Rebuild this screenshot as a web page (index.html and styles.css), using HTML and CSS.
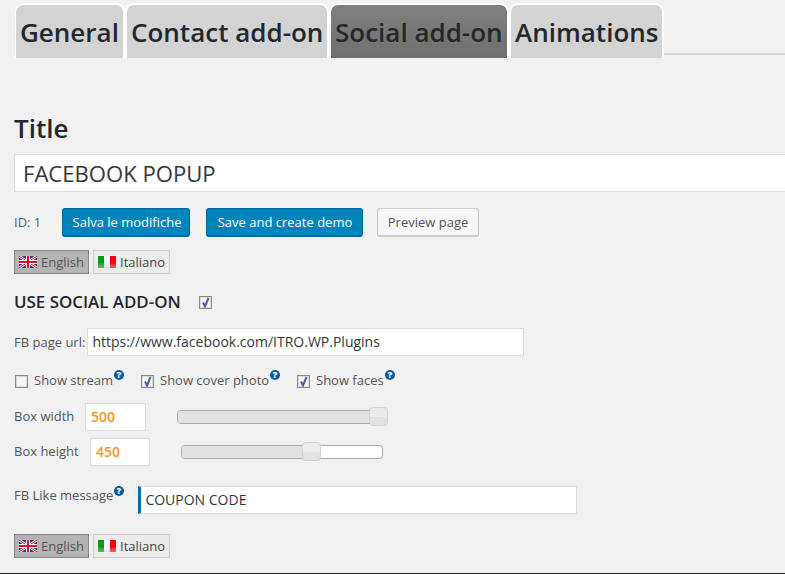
FILE: index.html
```html
<!DOCTYPE html>
<html lang="en">
<head>
<meta charset="utf-8">
<title>Social add-on</title>
<link rel="stylesheet" href="styles.css">
</head>
<body>
<svg class="defs" width="0" height="0" aria-hidden="true">
  <defs>
    <linearGradient id="fade" x1="0" y1="0" x2="0" y2="1">
      <stop offset="0.55" stop-color="#fff" stop-opacity="0"/>
      <stop offset="1" stop-color="#bbb" stop-opacity="0.55"/>
    </linearGradient>
    <symbol id="uk" viewBox="0 0 18 12">
      <rect width="18" height="12" fill="#2a3a8c"/>
      <path d="M0 0L18 12M18 0L0 12" stroke="#fff" stroke-width="2.6"/>
      <path d="M0 0L18 12M18 0L0 12" stroke="#d8102c" stroke-width="1"/>
      <path d="M9 0V12M0 6H18" stroke="#fff" stroke-width="4"/>
      <path d="M9 0V12M0 6H18" stroke="#d8102c" stroke-width="2.2"/>
    </symbol>
    <symbol id="it" viewBox="0 0 18 12">
      <rect width="6" height="12" fill="#0a9a10"/>
      <rect x="6" width="6" height="12" fill="#f8f8f8"/>
      <rect x="12" width="6" height="12" fill="#f00010"/>
      <rect width="18" height="12" fill="url(#fade)"/>
    </symbol>
    <symbol id="chk" viewBox="0 0 11 11">
      <path d="M3 5.5L5 9.5L8.5 1" fill="none" stroke="#4a5fa8" stroke-width="2"/>
    </symbol>
    <symbol id="help" viewBox="0 0 10 10">
      <circle cx="5" cy="5" r="5" fill="#0a5a9c"/>
      <text x="5" y="8.4" text-anchor="middle" font-family="Open Sans" font-weight="800" font-size="9.5" fill="#fff">?</text>
    </symbol>
  </defs>
</svg>

<nav class="tabs">
  <a class="tab tab-general">General</a>
  <a class="tab tab-contact">Contact add-on</a>
  <a class="tab tab-social tab-active">Social add-on</a>
  <a class="tab tab-anim">Animations</a>
  <span class="tabs-line"></span>
</nav>

<main class="content">
  <h1 class="title-label">Title</h1>
  <div class="title-field">FACEBOOK POPUP</div>

  <div class="actions">
    <span class="post-id">ID: 1</span>
    <button class="btn btn-primary btn-save">Salva le modifiche</button>
    <button class="btn btn-primary btn-demo">Save and create demo</button>
    <button class="btn btn-secondary">Preview page</button>
  </div>

  <div class="langs">
    <span class="lang lang-on"><svg class="flag"><use href="#uk"/></svg>English</span>
    <span class="lang"><svg class="flag"><use href="#it"/></svg>Italiano</span>
  </div>

  <div class="section-head">
    <h2 class="section-title">USE SOCIAL ADD-ON</h2>
    <span class="check"><svg class="tick"><use href="#chk"/></svg></span>
  </div>

  <div class="url-row">
    <span class="label">FB page url:</span>
    <div class="field url-field">https://www.facebook.com/ITRO.WP.Plugins</div>
  </div>

  <div class="options">
    <span class="option opt-stream"><span class="check"></span><span class="label">Show stream</span><svg class="help"><use href="#help"/></svg></span>
    <span class="option opt-cover"><span class="check"><svg class="tick"><use href="#chk"/></svg></span><span class="label">Show cover photo</span><svg class="help"><use href="#help"/></svg></span>
    <span class="option"><span class="check"><svg class="tick"><use href="#chk"/></svg></span><span class="label">Show faces</span><svg class="help"><use href="#help"/></svg></span>
  </div>

  <div class="size-row size-width">
    <span class="label">Box width</span>
    <div class="num-field">500</div>
    <div class="slider"><div class="slider-fill fill-full"></div><span class="handle handle-full"></span></div>
  </div>
  <div class="size-row size-height">
    <span class="label">Box height</span>
    <div class="num-field">450</div>
    <div class="slider"><div class="slider-fill fill-part"></div><span class="handle handle-part"></span></div>
  </div>

  <div class="like-row">
    <span class="label">FB Like message</span><svg class="help"><use href="#help"/></svg>
    <div class="field like-field">COUPON CODE</div>
  </div>

  <div class="langs langs-bottom">
    <span class="lang lang-on"><svg class="flag"><use href="#uk"/></svg>English</span>
    <span class="lang"><svg class="flag"><use href="#it"/></svg>Italiano</span>
  </div>
</main>
<div class="page-end"></div>
</body>
</html>
```

FILE: styles.css
```css
* { box-sizing: border-box; }
html, body { margin: 0; padding: 0; }
body {
  width: 785px;
  height: 574px;
  overflow: hidden;
  position: relative;
  background: #f1f1f1;
  color: #444;
  font-family: "Open Sans", sans-serif;
  font-size: 13px;
}
.defs { position: absolute; }

/* Tabs */
.tabs {
  display: flex;
  height: 58px;
  padding: 3px 0 0 15px;
  position: relative;
}
.tab {
  height: 55px;
  padding: 11px 0 0 4px;
  background: #d3d3d3;
  border: 2px solid #fff;
  border-bottom: 0;
  border-radius: 9px 9px 0 0;
  color: #23282d;
  font-size: 26px;
  font-weight: 600;
  line-height: 32px;
  white-space: nowrap;
}
.tab-general { width: 110px; border-left-width: 1px; }
.tab-contact { width: 204px; }
.tab-social { width: 180px; }
.tab-anim { width: 155px; }
.tab-active { background: linear-gradient(#808080, #6f6f6f); }
.tabs-line {
  flex: 1;
  align-self: flex-start;
  height: 2px;
  margin-top: 50px;
  background: #d3d3d3;
}

/* Content */
.content { padding: 0 0 0 14px; }
.title-label {
  margin: 52px 0 0;
  color: #23282d;
  font-size: 26px;
  font-weight: 600;
  line-height: 36px;
}
.title-field {
  width: 780px;
  height: 38px;
  margin-top: 8px;
  padding-left: 8px;
  background: #fff;
  border: 1px solid #ddd;
  color: #32373c;
  font-size: 22.1px;
  line-height: 36px;
  white-space: nowrap;
}
.actions {
  display: flex;
  align-items: flex-start;
  height: 29px;
  margin-top: 16px;
}
.post-id { width: 48px; line-height: 29px; font-size: 13px; color: #50606c; }
.btn {
  height: 29px;
  padding: 0 0 0 2px;
  border-radius: 3px;
  font-family: inherit;
  font-size: 13px;
  line-height: 26px;
}
.btn-primary {
  background: #0085ba;
  border: 1px solid #006799;
  border-bottom-width: 2px;
  color: #fff;
}
.btn-save { width: 128px; margin-right: 16px; }
.btn-demo { width: 157px; margin-right: 14px; padding-left: 1px; }
.btn-secondary {
  width: 102px;
  padding: 0;
  background: #f7f7f7;
  border: 1px solid #ccc;
  border-bottom-width: 2px;
  color: #555;
}

/* Language switch */
.langs { display: flex; gap: 4px; margin-top: 13px; }
.lang {
  display: flex;
  align-items: center;
  gap: 4px;
  width: 77px;
  height: 24px;
  padding-left: 4px;
  background: #ececec;
  border: 1px solid #ccc;
  color: #444;
  font-size: 13px;
}
.lang-on {
  width: 75px;
  background: #b4b4b4;
  border-color: #888;
  color: #555;
}
.flag { width: 18px; height: 12px; flex: none; }

/* Section */
.section-head {
  display: flex;
  align-items: center;
  height: 24px;
  margin-top: 16px;
}
.section-title {
  margin: 0 18px 0 0;
  color: #23282d;
  font-size: 16.9px;
  font-weight: 600;
  line-height: 24px;
}
.check {
  display: inline-block;
  flex: none;
  width: 13px;
  height: 13px;
  background: #f6f6f6;
  border: 1px solid #8a8a8a;
  box-shadow: inset 0 0 0 1px #dcdcdc;
}
.tick { display: block; width: 11px; height: 11px; }
.label { color: #555; font-size: 13px; white-space: nowrap; }

.url-row { display: flex; align-items: center; gap: 2px; margin-top: 14px; }
.field {
  height: 28px;
  background: #fff;
  border: 1px solid #ddd;
  color: #32373c;
  font-size: 14px;
  line-height: 26px;
  white-space: nowrap;
}
.url-field { width: 437px; padding-left: 4px; }

.options { display: flex; align-items: center; height: 20px; margin-top: 15px; padding-left: 1px; }
.options .label { margin-bottom: 2px; }
.option { display: flex; align-items: center; }
.option .check { margin-right: 6px; }
.opt-stream { width: 126px; }
.opt-cover { width: 156px; }
.help { width: 10px; height: 10px; flex: none; align-self: flex-start; margin-left: 1px; }
.options .help { margin-top: -1px; }

.size-row { display: flex; align-items: center; height: 28px; }
.size-row .label { margin-bottom: 2px; }
.size-width { margin-top: 12px; }
.size-height { margin-top: 7px; }
.num-field {
  height: 28px;
  background: #fff;
  border: 1px solid #ddd;
  color: #f7941e;
  font-size: 14px;
  font-weight: 600;
  line-height: 26px;
  padding-left: 5px;
}
.size-width .label { width: 71px; }
.size-width .num-field { width: 61px; margin-right: 31px; }
.size-height .label { width: 76px; }
.size-height .num-field { width: 60px; margin-right: 31px; }
.slider {
  position: relative;
  height: 14px;
  background: #fff;
  border: 1px solid #aaa;
  border-radius: 4px;
}
.size-width .slider { width: 211px; }
.size-height .slider { width: 202px; }
.slider-fill { height: 100%; background: #e2e2e2; border-radius: 3px 0 0 3px; }
.fill-full { width: 100%; }
.fill-part { width: 64%; }
.handle {
  position: absolute;
  top: -4px;
  width: 19px;
  height: 19px;
  background: linear-gradient(#ececec 50%, #e3e3e3 50%);
  border: 1px solid #d3d3d3;
  border-radius: 4px;
}
.handle-full { right: -1px; }
.handle-part { left: 120px; }

.like-row { display: flex; align-items: flex-start; margin-top: 20px; height: 28px; }
.like-row .label { line-height: 18px; }
.like-field {
  width: 439px;
  margin-left: 14px;
  padding-left: 4px;
  border-left: 3px solid #0073aa;
  font-size: 14px;
}
.langs-bottom { margin-top: 20px; }

.page-end {
  position: absolute;
  left: 0;
  right: 0;
  bottom: 0;
  height: 1px;
  background: #23282d;
}
```
